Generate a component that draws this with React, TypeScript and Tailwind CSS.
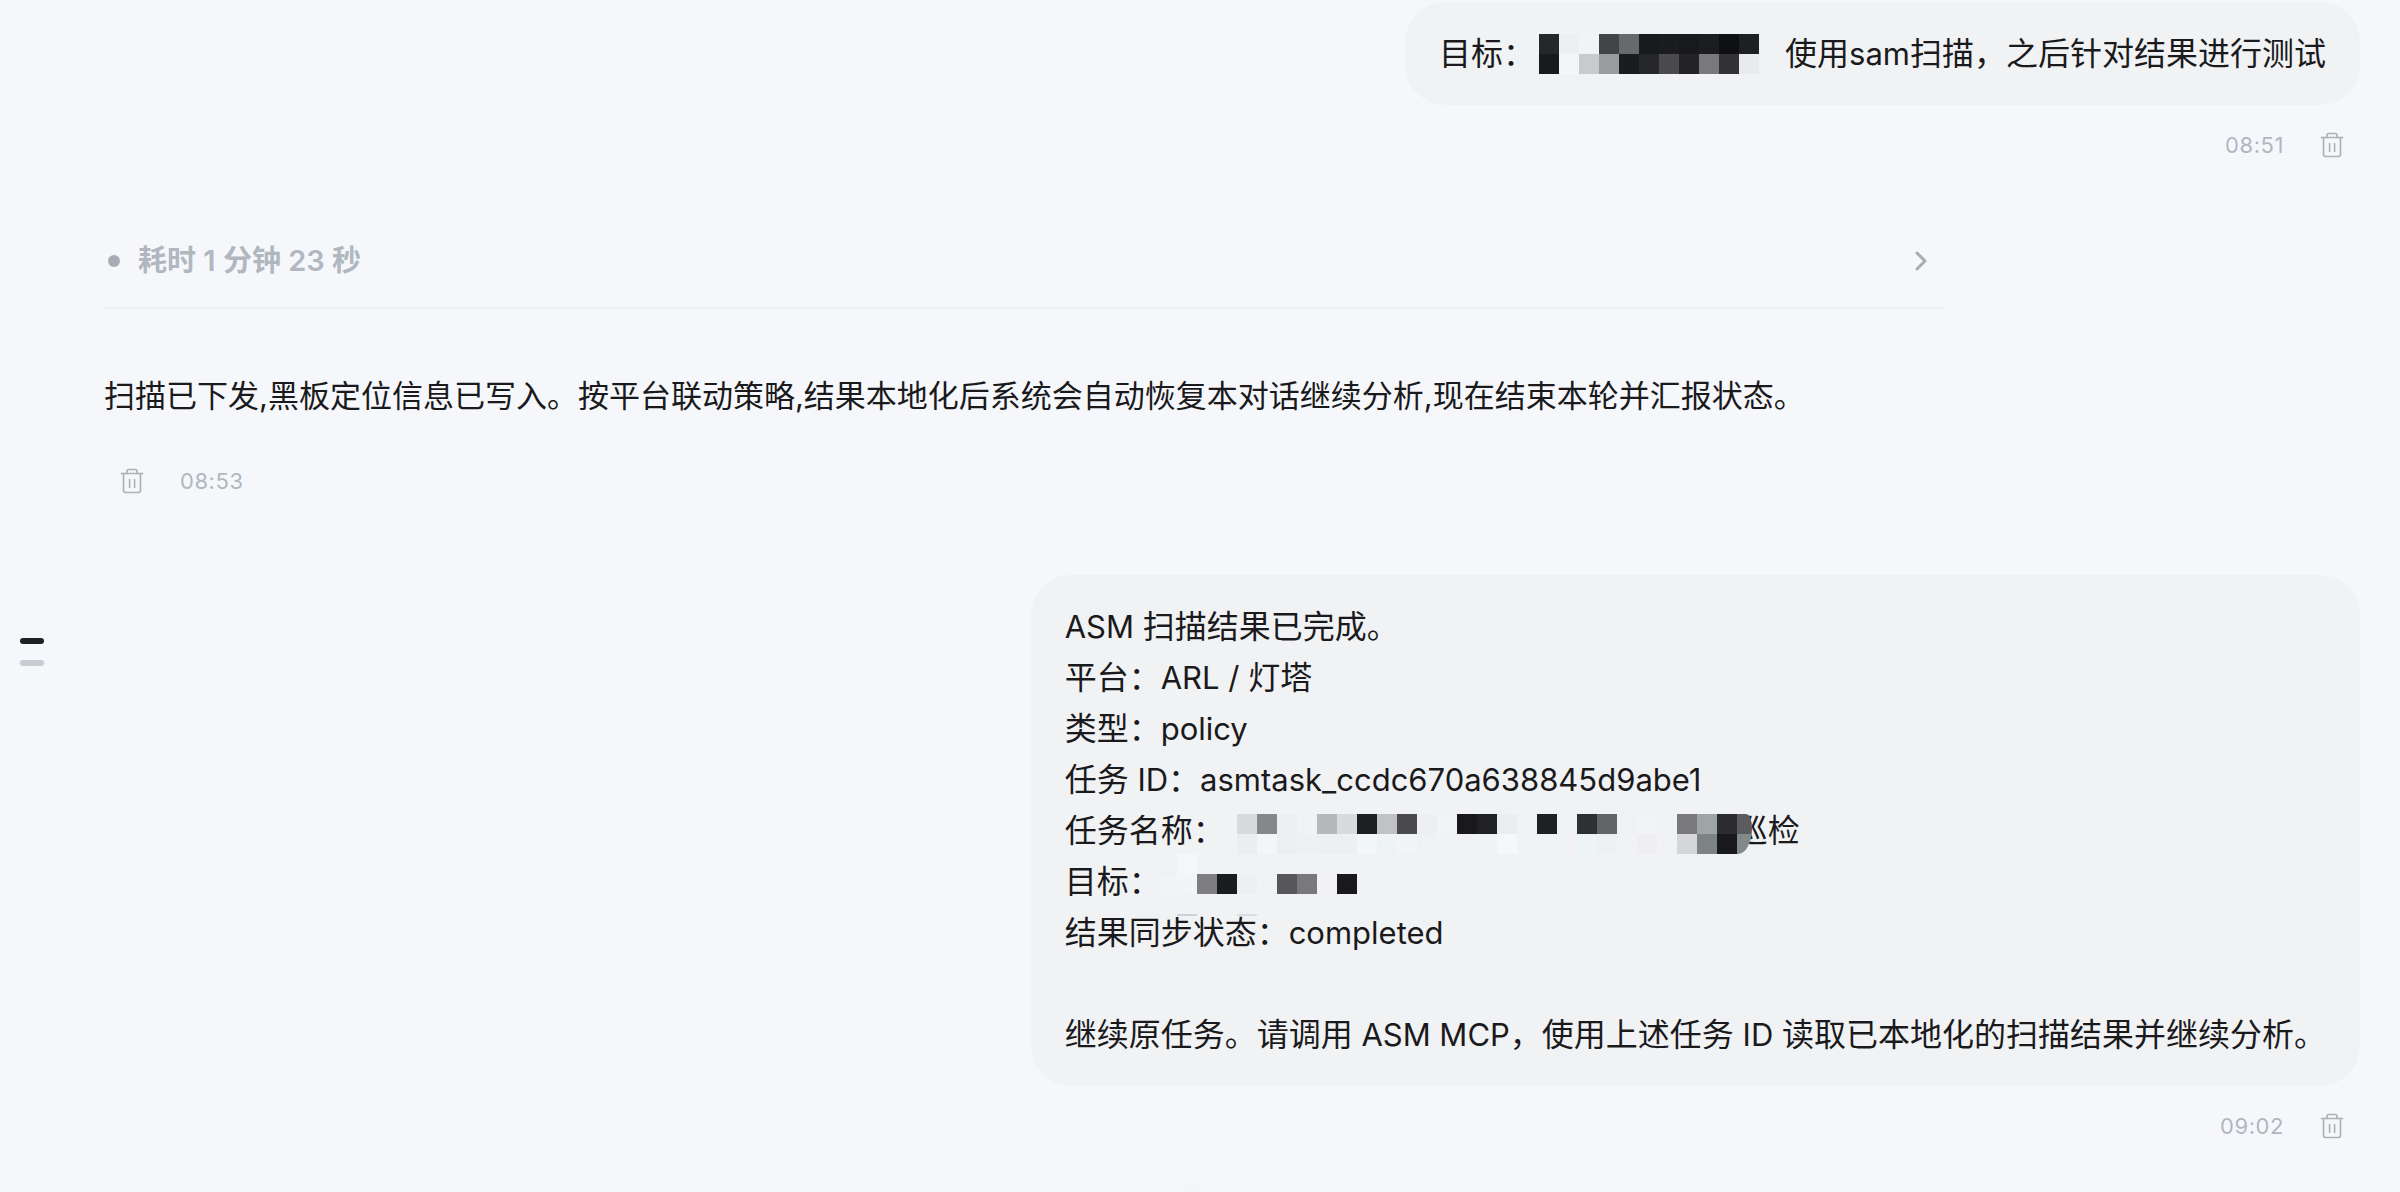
import type { ReactNode } from "react";

type Cell = [col: number, row: number, color: string];

const CELL = 20;

const TARGET_CELLS: Cell[] = [
  [0, 0, "#262729"], [1, 0, "#eeeff1"], [2, 0, "#f2f3f5"], [3, 0, "#434446"], [4, 0, "#68696b"],
  [5, 0, "#191a1c"], [6, 0, "#1b1c1e"], [7, 0, "#18191b"], [8, 0, "#1c1d1f"], [9, 0, "#0f1012"], [10, 0, "#1e1f21"],
  [0, 1, "#191a1c"], [1, 1, "#f4f5f8"], [2, 1, "#c9cacc"], [3, 1, "#9a9b9d"], [4, 1, "#1b1c1e"],
  [5, 1, "#262729"], [6, 1, "#4b4b4d"], [7, 1, "#242426"], [8, 1, "#79797b"], [9, 1, "#323234"], [10, 1, "#e9eaec"],
];

const NAME_CELLS: Cell[] = [
  [0, 0, "#d9dadc"], [1, 0, "#868788"], [2, 0, "#eeeff1"], [3, 0, "#f1f2f5"], [4, 0, "#b5b9ba"],
  [5, 0, "#d9dadc"], [6, 0, "#1e1f21"], [7, 0, "#c1c2c4"], [8, 0, "#4b4b4d"], [9, 0, "#eeeff1"],
  [10, 0, "#f2f3f5"], [11, 0, "#19191b"], [12, 0, "#202123"], [13, 0, "#ecedef"], [14, 0, "#f0f1f3"],
  [15, 0, "#1e2023"], [16, 0, "#f0f1f3"], [17, 0, "#2f3032"], [18, 0, "#636466"], [19, 0, "#f0f1f3"],
  [20, 0, "#f2f3f6"], [22, 0, "#79797b"], [23, 0, "#9fa4a4"], [24, 0, "#2c2c2e"], [25, 0, "#5c5c5e"],
  [0, 1, "#ecedef"], [1, 1, "#f4f5f8"], [2, 1, "#ebefef"], [3, 1, "#eff0f2"], [4, 1, "#eeeff1"],
  [5, 1, "#eeeff1"], [6, 1, "#f1f6f7"], [7, 1, "#eef3f3"], [8, 1, "#f2f4f6"], [9, 1, "#f0f1f3"],
  [11, 1, "#f0f1f3"], [13, 1, "#f6f7fa"], [17, 1, "#edf4f4"], [18, 1, "#eff0f2"], [20, 1, "#efeff2"],
  [22, 1, "#d5d6d8"], [23, 1, "#7d8282"], [24, 1, "#19191b"], [25, 1, "#838989"],
];

const HOST_CELLS: Cell[] = [
  [0, 0, "#f0f1f3"], [1, 0, "#f5f6f9"], [4, 0, "#f0f1f3"],
  [0, 1, "#f2f3f5"], [1, 1, "#f3f4f7"], [2, 1, "#7e7e80"], [3, 1, "#1b1c1e"], [4, 1, "#eeeff1"],
  [6, 1, "#575759"], [7, 1, "#79797b"], [9, 1, "#19191b"],
  [1, 3, "#d0d1d3"], [4, 3, "#dcdddf"],
];

function Mosaic({ cells, width, height, className }: { cells: Cell[]; width: number; height: number; className: string }) {
  return (
    <svg aria-hidden="true" width={width} height={height} shapeRendering="crispEdges" className={`shrink-0 ${className}`}>
      {cells.map(([col, row, color]) => (
        <rect key={`${col}-${row}`} x={col * CELL} y={row * CELL} width={CELL} height={CELL} fill={color} />
      ))}
    </svg>
  );
}

// Latin runs sit slightly smaller than the Chinese text around them
function Latin({ children }: { children: string }) {
  return <span className="text-[31px]">{children}</span>;
}

function TrashIcon() {
  return (
    <svg viewBox="0 0 24 28" className="h-7 w-6" fill="none" stroke="currentColor" strokeWidth="1.6" strokeLinecap="round" strokeLinejoin="round">
      <path d="M1.500 6.500h21" />
      <path d="M7 6.500V4.500a2 2 0 0 1 2-2h6a2 2 0 0 1 2 2v2" />
      <path d="M3.500 6.500v17a2 2 0 0 0 2 2h13a2 2 0 0 0 2-2v-17" />
      <path d="M9.600 12.500v8M14.600 12.500v8" />
    </svg>
  );
}

function Meta({ time, side }: { time: string; side: "left" | "right" }) {
  return (
    <div className={`flex h-10 items-center gap-9 ${side === "left" ? "flex-row-reverse self-start pl-4" : "pr-4"}`}>
      <time className="text-[22px] leading-10 tracking-wide text-[#b0b7bf]">{time}</time>
      <button type="button" aria-label="删除" className="flex h-10 w-6 items-center justify-center text-[#adafb3]">
        <TrashIcon />
      </button>
    </div>
  );
}

function UserMessage({ time, children }: { time: string; children: ReactNode }) {
  return (
    <article className="flex flex-col items-end gap-5">
      <div className="rounded-[40px] bg-[#f1f2f4] px-[34px] py-[26px] text-[32px] leading-[51px]">{children}</div>
      <Meta time={time} side="right" />
    </article>
  );
}

export default function App() {
  return (
    <main className="relative min-h-screen overflow-hidden bg-[#f6f7fb] font-[Inter,'Noto_Sans_CJK_SC',sans-serif] text-[#1a1a1c]">
      <nav aria-label="消息导航" className="absolute top-[638px] left-5 flex flex-col gap-4">
        <a href="#first" aria-label="第一条" className="h-1.5 w-6 rounded-full bg-[#1f2126]" />
        <a href="#second" aria-label="第二条" className="h-1.5 w-6 rounded-full bg-[#c9cbd2]" />
      </nav>

      <div className="flex flex-col pt-0.5 pr-10 pl-[104px]">
        <div id="first">
          <UserMessage time="08:51">
            <p className="flex items-center">
              <span>目标：</span>
              <Mosaic cells={TARGET_CELLS} width={220} height={40} className="mr-6.5 ml-1" />
              <span>
                使用<Latin>sam</Latin>扫描，之后针对结果进行测试
              </span>
            </p>
          </UserMessage>
        </div>

        <article className="mt-14 flex w-full max-w-[1840px] flex-col">
          <button type="button" className="flex h-[88px] items-center border-b-2 border-[#eeeff2] pr-3 pb-1.5 pl-1 text-left">
            <span className="mr-[18px] size-3 rounded-full bg-[#a9adb3]" />
            <span className="flex-1 text-[29px] font-semibold text-[#b0b7bf]">耗时 1 分钟 23 秒</span>
            <svg viewBox="0 0 20 20" className="size-5" fill="none" stroke="#a9abb1" strokeWidth="3" strokeLinecap="round" strokeLinejoin="round">
              <path d="M5 2l8 8-8 8" />
            </svg>
          </button>
          <p className="mt-[62px] text-[31px] leading-[50px]">
            扫描已下发,黑板定位信息已写入。按平台联动策略,结果本地化后系统会自动恢复本对话继续分析,现在结束本轮并汇报状态。
          </p>
          <div className="mt-10 flex">
            <Meta time="08:53" side="left" />
          </div>
        </article>

        <div id="second" className="mt-[74px]">
          <UserMessage time="09:02">
            <p><Latin>ASM </Latin>扫描结果已完成。</p>
            <p>平台：<Latin>ARL / </Latin>灯塔</p>
            <p>类型：<Latin>policy</Latin></p>
            <p>任务<Latin> ID</Latin>：<Latin>asmtask_ccdc670a638845d9abe1</Latin></p>
            <p className="flex items-center">
              <span>任务名称：</span>
              <Mosaic
                cells={NAME_CELLS}
                width={515}
                height={40}
                className="relative z-10 mb-0.5 -mr-4 ml-3 self-end rounded-[0_6px_14px_0/0_14px_26px_0]"
              />
              <span>巡检</span>
            </p>
            <p className="flex items-center">
              <span>目标：</span>
              <Mosaic cells={HOST_CELLS} width={200} height={62} className="-mt-0.5 -mb-3 -ml-1 self-start" />
            </p>
            <p>结果同步状态：<Latin>completed</Latin></p>
            <p>&nbsp;</p>
            <p>
              继续原任务。请调用<Latin> ASM MCP</Latin>，使用上述任务<Latin> ID </Latin>读取已本地化的扫描结果并继续分析。
            </p>
          </UserMessage>
        </div>
      </div>

      <button
        type="button"
        aria-label="回到底部"
        className="absolute -bottom-18 left-1/2 size-16 -translate-x-10 rounded-full bg-[#f4f5f8] shadow-[0_0_24px_rgba(0,0,0,0.06)]"
      />
    </main>
  );
}
